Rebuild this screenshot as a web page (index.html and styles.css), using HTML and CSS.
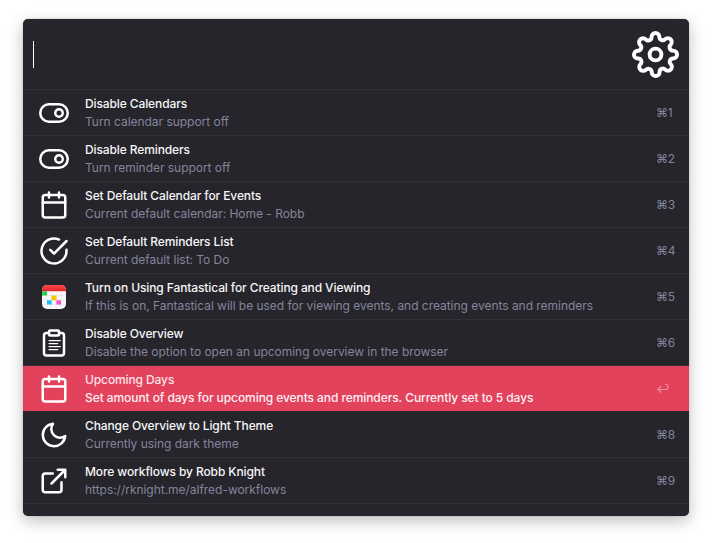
FILE: index.html
```html
<!DOCTYPE html>
<html lang="en">
<head>
<meta charset="utf-8">
<title>Workflow settings</title>
<link rel="stylesheet" href="styles.css">
</head>
<body>
<main class="window">
  <header class="search">
    <span class="caret"></span>
    <svg class="gear" viewBox="0 0 24 24"><circle cx="12" cy="12" r="3"/><path d="M19.4 15a1.65 1.65 0 0 0 .33 1.82l.06.06a2 2 0 0 1 0 2.83 2 2 0 0 1-2.83 0l-.06-.06a1.65 1.65 0 0 0-1.82-.33 1.65 1.65 0 0 0-1 1.51V21a2 2 0 0 1-2 2 2 2 0 0 1-2-2v-.09A1.65 1.65 0 0 0 9 19.4a1.65 1.65 0 0 0-1.82.33l-.06.06a2 2 0 0 1-2.83 0 2 2 0 0 1 0-2.83l.06-.06a1.65 1.65 0 0 0 .33-1.82 1.65 1.65 0 0 0-1.51-1H3a2 2 0 0 1-2-2 2 2 0 0 1 2-2h.09A1.65 1.65 0 0 0 4.6 9a1.65 1.65 0 0 0-.33-1.82l-.06-.06a2 2 0 0 1 0-2.83 2 2 0 0 1 2.83 0l.06.06a1.65 1.65 0 0 0 1.82.33H9a1.65 1.65 0 0 0 1-1.51V3a2 2 0 0 1 2-2 2 2 0 0 1 2 2v.09a1.65 1.65 0 0 0 1 1.51 1.65 1.65 0 0 0 1.82-.33l.06-.06a2 2 0 0 1 2.83 0 2 2 0 0 1 0 2.83l-.06.06a1.65 1.65 0 0 0-.33 1.82V9a1.65 1.65 0 0 0 1.51 1H21a2 2 0 0 1 2 2 2 2 0 0 1-2 2h-.09a1.65 1.65 0 0 0-1.51 1z"/></svg>
  </header>
  <ul class="results">
    <li class="row">
      <svg class="icon" viewBox="0 0 24 24"><rect x="1" y="5" width="22" height="14" rx="7"/><circle cx="16" cy="12" r="3"/></svg>
      <div class="text"><div class="title">Disable Calendars</div><div class="sub">Turn calendar support off</div></div>
      <div class="key">⌘1</div>
    </li>
    <li class="row">
      <svg class="icon" viewBox="0 0 24 24"><rect x="1" y="5" width="22" height="14" rx="7"/><circle cx="16" cy="12" r="3"/></svg>
      <div class="text"><div class="title">Disable Reminders</div><div class="sub">Turn reminder support off</div></div>
      <div class="key">⌘2</div>
    </li>
    <li class="row">
      <svg class="icon" viewBox="0 0 24 24"><rect x="3" y="4" width="18" height="18" rx="2"/><path d="M16 2v4M8 2v4M3 10h18"/></svg>
      <div class="text"><div class="title">Set Default Calendar for Events</div><div class="sub">Current default calendar: Home - Robb</div></div>
      <div class="key">⌘3</div>
    </li>
    <li class="row">
      <svg class="icon" viewBox="0 0 24 24"><path d="M22 11.08V12a10 10 0 1 1-5.93-9.14M22 4 12 14.01l-3-3"/></svg>
      <div class="text"><div class="title">Set Default Reminders List</div><div class="sub">Current default list: To Do</div></div>
      <div class="key">⌘4</div>
    </li>
    <li class="row">
      <svg class="app-icon" viewBox="0 0 30 30">
        <defs>
          <clipPath id="tile"><rect x="3" y="3" width="24" height="24" rx="5"/></clipPath>
          <linearGradient id="red" x2="0" y2="1"><stop stop-color="#ff4547"/><stop offset="1" stop-color="#e0252d"/></linearGradient>
        </defs>
        <g clip-path="url(#tile)">
          <path fill="#f8f8fb" d="M3 3h24v24H3z"/>
          <path fill="url(#red)" d="M3 3h24v6.3H3z"/>
          <path stroke="#dfe1ea" stroke-width=".6" d="M8 9.3V27M12.6 9.3V27M17.4 9.3V27M22 9.3V27M3 13.6h24M3 18.2h24M3 22.6h24"/>
          <path fill="#22d052" d="M3 9.3h5v4.3H3z"/>
          <path fill="#ffc400" d="M12.6 13.6h4.8v4.6h-4.8z"/>
          <path fill="#19bdfc" d="M8 18.2h4.6v4.4H8z"/>
          <path fill="#ff4dcc" d="M17.4 18.2H22v4.4h-4.6z"/>
        </g>
      </svg>
      <div class="text"><div class="title">Turn on Using Fantastical for Creating and Viewing</div><div class="sub">If this is on, Fantastical will be used for viewing events, and creating events and reminders</div></div>
      <div class="key">⌘5</div>
    </li>
    <li class="row">
      <svg class="icon" viewBox="0 0 24 24"><path d="M16 4h2a2 2 0 0 1 2 2v14a2 2 0 0 1-2 2H6a2 2 0 0 1-2-2V6a2 2 0 0 1 2-2h2"/><rect x="8" y="2" width="8" height="4" rx="1"/><path class="fine" d="M8 10h9M8 12.4h7M8 14.8h9M8 17.2h7"/></svg>
      <div class="text"><div class="title">Disable Overview</div><div class="sub">Disable the option to open an upcoming overview in the browser</div></div>
      <div class="key">⌘6</div>
    </li>
    <li class="row selected">
      <svg class="icon" viewBox="0 0 24 24"><rect x="3" y="4" width="18" height="18" rx="2"/><path d="M16 2v4M8 2v4M3 10h18"/></svg>
      <div class="text"><div class="title">Upcoming Days</div><div class="sub">Set amount of days for upcoming events and reminders. Currently set to 5 days</div></div>
      <div class="key">↩</div>
    </li>
    <li class="row">
      <svg class="icon" viewBox="0 0 24 24"><path d="M21 12.79A9 9 0 1 1 11.21 3 7 7 0 0 0 21 12.79z"/></svg>
      <div class="text"><div class="title">Change Overview to Light Theme</div><div class="sub">Currently using dark theme</div></div>
      <div class="key">⌘8</div>
    </li>
    <li class="row">
      <svg class="icon" viewBox="0 0 24 24"><path d="M18 13v6a2 2 0 0 1-2 2H5a2 2 0 0 1-2-2V8a2 2 0 0 1 2-2h6M15 3h6v6M10 14 21 3"/></svg>
      <div class="text"><div class="title">More workflows by Robb Knight</div><div class="sub">https://rknight.me/alfred-workflows</div></div>
      <div class="key">⌘9</div>
    </li>
  </ul>
</main>
</body>
</html>
```
FILE: styles.css
```css
* { box-sizing: border-box; }

body {
  margin: 0;
  padding: 19px 23px 27px;
  background: #fff;
  font-family: Inter, "Liberation Sans", sans-serif;
}

.window {
  height: 497px;
  background: #26252b;
  border-radius: 5px;
  overflow: hidden;
  box-shadow: 0 0 1px rgba(0, 0, 0, .5), 0 5px 16px rgba(0, 0, 0, .26);
}

.search {
  display: flex;
  align-items: center;
  justify-content: space-between;
  height: 71px;
  padding: 0 10px;
  border-bottom: 1px solid #302f36;
}

.caret {
  width: 1px;
  height: 27px;
  background: #fff;
}

.gear, .icon {
  fill: none;
  stroke: #fff;
  stroke-width: 2;
  stroke-linecap: round;
  stroke-linejoin: round;
}

.gear {
  width: 47px;
  height: 47px;
}

.results {
  margin: 0;
  padding: 0;
  list-style: none;
}

.row {
  display: flex;
  height: 46px;
  padding: 0 13px 0 16px;
  border-bottom: 1px solid #302f36;
}

.icon, .app-icon {
  flex: none;
  width: 30px;
  height: 30px;
  margin: 8px 16px 0 0;
}

.fine { stroke-width: 1; }

.text {
  flex: 1;
  padding-top: 5px;
  font-size: 12px;
  line-height: 18px;
  white-space: nowrap;
}

.title {
  color: #f6f6f8;
  font-weight: 500;
  letter-spacing: -.11px;
}

.sub {
  color: #84849c;
  letter-spacing: -.03px;
}

.key {
  width: 20px;
  padding-top: 14px;
  color: #84849c;
  font-size: 12px;
  line-height: 18px;
  letter-spacing: -.3px;
}

.selected {
  background: #e3425d;
  border-color: #26252b;
}

.selected .title { color: #fbe3e8; }

.selected .sub {
  color: #fff0f3;
  font-weight: 500;
  letter-spacing: -.08px;
}

.selected .key { color: #f0949f; }
```
